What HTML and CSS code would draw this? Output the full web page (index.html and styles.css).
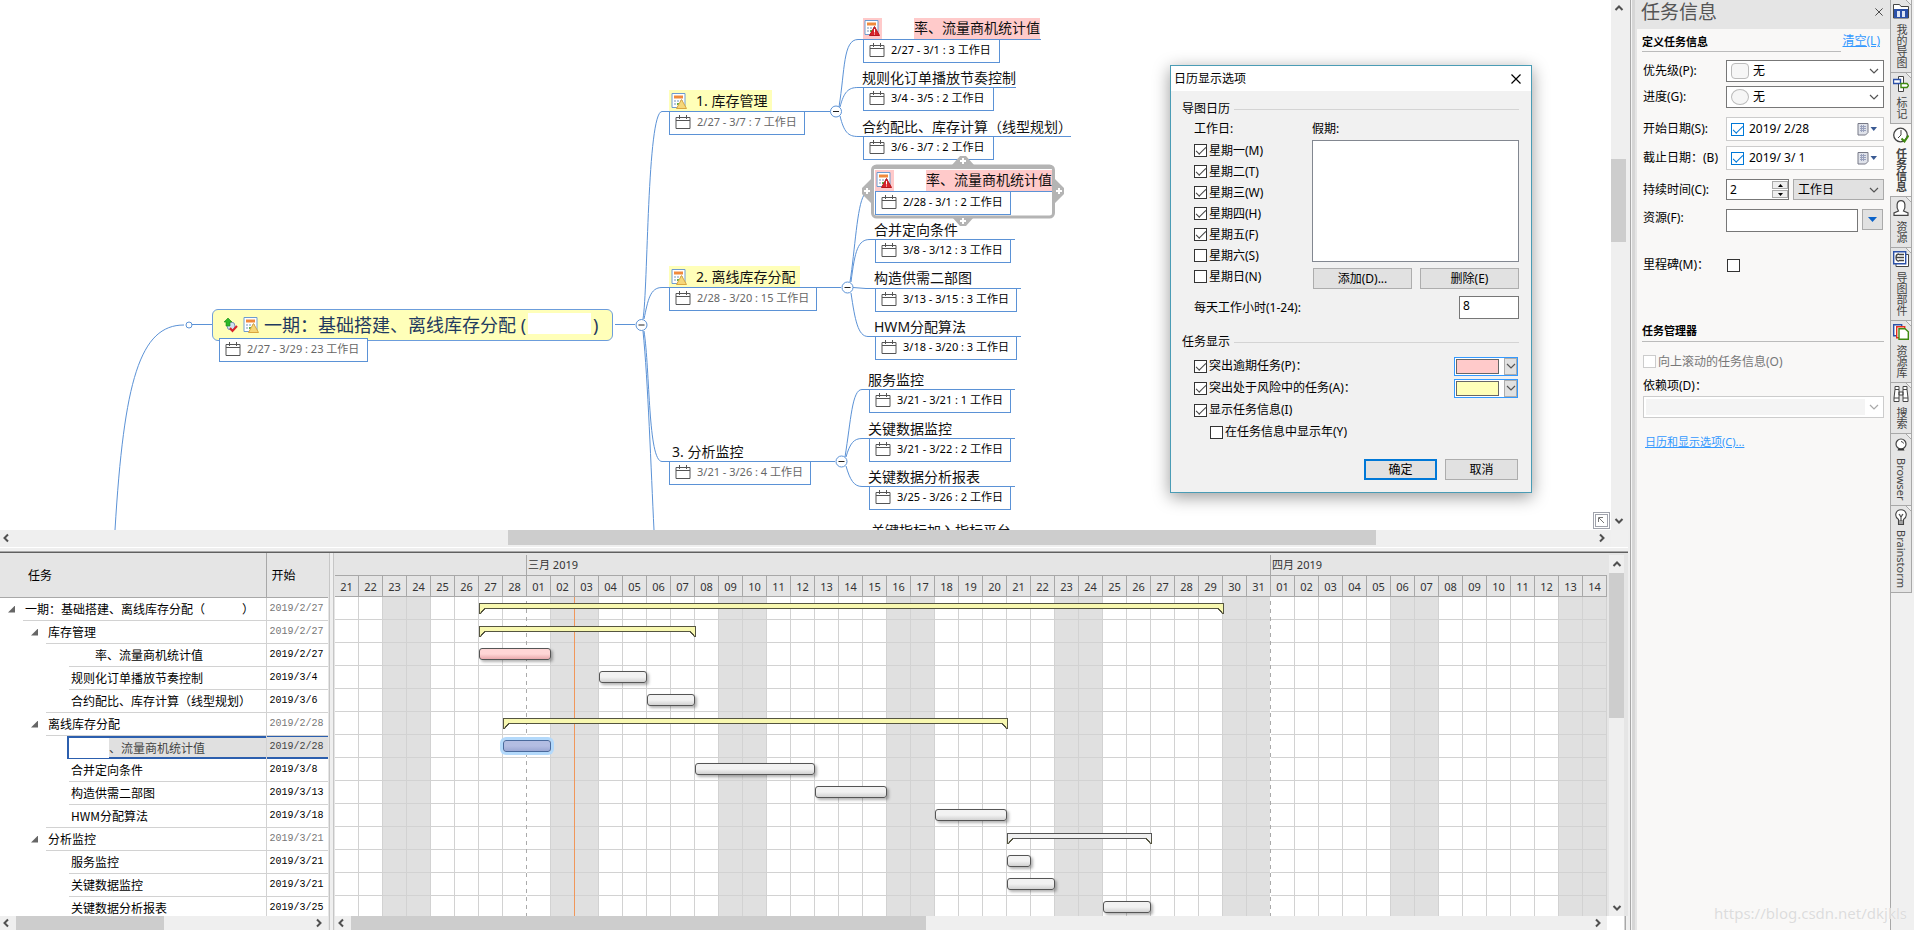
FILE: index.html
```html
<!DOCTYPE html>
<html lang="zh-CN">
<head>
<meta charset="utf-8">
<title>任务信息</title>
<link rel="stylesheet" href="styles.css">
</head>
<body>
<svg class="defs" aria-hidden="true">
  <defs>
    <symbol id="cal" viewBox="0 0 16 14"><path d="M1 2.5h14v11H1zM1 5.5h14M4.500 0v4M11.500 0v4" fill="none" stroke="#555"/></symbol>
    <symbol id="sheet" viewBox="0 0 16 16"><path d="M1 .5h13v14H1z" fill="#fff" stroke="#6d9bd0"/><path d="M3 2.500h9v3H3z" fill="#f08a3c"/><path d="M3 7h2v2H3zM6 7h2v2H6zM9 7h3v2H9zM3 10h2v2H3z" fill="#b9c9dd"/><path d="M6 10h2v2H6z" fill="#5bb04a"/></symbol>
    <symbol id="warn" viewBox="0 0 16 16"><use href="#sheet"/><path d="M10.500 6.500l5 9h-10z" fill="#f6d779" stroke="#d9a640"/></symbol>
    <symbol id="late" viewBox="0 0 16 16"><use href="#sheet"/><path d="M10.500 6.500l5 9h-10z" fill="#d8232a" stroke="#b5161c"/><path d="M10.500 9v3.500M10.500 13.500v1" stroke="#fff"/></symbol>
    <symbol id="up" viewBox="0 0 10 8"><path d="M1.500 6L5 2.500 8.500 6" fill="none" stroke="#505050" stroke-width="2"/></symbol>
    <symbol id="down" viewBox="0 0 10 8"><path d="M1.500 2L5 5.500 8.500 2" fill="none" stroke="#505050" stroke-width="2"/></symbol>
    <symbol id="left" viewBox="0 0 8 10"><path d="M6 1.500L2.500 5 6 8.500" fill="none" stroke="#505050" stroke-width="2"/></symbol>
    <symbol id="right" viewBox="0 0 8 10"><path d="M2 1.500L5.500 5 2 8.500" fill="none" stroke="#505050" stroke-width="2"/></symbol>
    <symbol id="chev" viewBox="0 0 10 6"><path d="M1 1l4 4 4-4" fill="none" stroke="#555" stroke-width="1.200"/></symbol>
    <symbol id="x" viewBox="0 0 10 10"><path d="M.5.5l9 9M9.500.5l-9 9" fill="none" stroke="currentColor" stroke-width="1.200"/></symbol>
    <symbol id="datepick" viewBox="0 0 20 13"><path d="M1 .5h10v9l-2.500 2.500H1z" fill="#dfe2ea" stroke="#777986"/><path d="M3 3.500h6M3 5.500h6M3 7.500h6M4.500 2v7M6.500 2v7" stroke="#9aa2bd" fill="none"/><path d="M13.500 4h6.500l-3.250 4z" fill="#3a5a93"/></symbol>
  </defs>
</svg>

<main class="main">
  <section class="map">
    <div class="canvas">
      <svg class="links" width="1611" height="560" fill="none" stroke="#5b92d6">
        <path d="M115 530C124 380 140 325 184 325M192 324.500H212M615 324.500H635"/>
        <circle cx="189" cy="325" r="3" fill="#fff"/>
        <path d="M643 319C648 290 647 111.500 662 111.500H830M644 319C648 300 650 287.500 662 287.500H841M644 331C650 370 648 461.500 662 461.500H835M643 331C648 380 651 470 654 530"/>
        <path d="M839 107C845 70 843 39.500 858 39.500H1041M840 107C844 92 848 87.500 858 87.500H1016M840 116C844 132 848 136.500 858 136.500H1071"/>
        <path d="M850 282C855 250 857 206 864 195M851 282C855 250 858 239.500 870 239.500H1015M853 287.500L866 288.500H1021M851 293C855 320 858 336.500 868 336.500H1021"/>
        <path d="M845 457C851 420 852 389.500 862 389.500H1015M846 457C850 443 854 438.500 862 438.500H1015M846 466C850 480 854 486.500 862 486.500H1015"/>
        <g fill="#fff"><circle cx="641.500" cy="325" r="5.500"/><circle cx="836" cy="111.500" r="5.500"/><circle cx="847.500" cy="287.500" r="5.500"/><circle cx="841.500" cy="461.500" r="5.500"/></g>
        <path d="M638.500 325h6M833 111.500h6M844.500 287.500h6M838.500 461.500h6" stroke="#222"/>
      </svg>

      <div class="topic root" style="left:212px;top:309px">
        <svg width="14" height="16" viewBox="0 0 14 16"><circle cx="7" cy="9" r="4" fill="#cfe0f0" stroke="#7d93b5"/><path d="M4 1l4 4H6v4H2V5H0z" fill="#2db928" stroke="#168a14" stroke-width=".6"/><path d="M6 11l2.500 3L13 9" fill="none" stroke="#d8232a" stroke-width="2"/></svg>
        <svg width="16" height="16"><use href="#warn"/></svg>
        <span>一期：基础搭建、离线库存分配 (</span><span class="blank"></span><span>)</span>
      </div>
      <div class="info soft" style="left:219px;top:338px;width:149px"><svg><use href="#cal"/></svg>2/27 - 3/29 : 23 工作日</div>

      <div class="topic risk" style="left:669px;top:90px"><svg width="16" height="16"><use href="#warn"/></svg><span>1. 库存管理</span></div>
      <div class="info soft" style="left:669px;top:111px;width:136px"><svg><use href="#cal"/></svg>2/27 - 3/7 : 7 工作日</div>
      <div class="topic risk" style="left:669px;top:266px"><svg width="16" height="16"><use href="#warn"/></svg><span>2. 离线库存分配</span></div>
      <div class="info soft" style="left:669px;top:287px;width:148px"><svg><use href="#cal"/></svg>2/28 - 3/20 : 15 工作日</div>
      <div class="topic" style="left:672px;top:441px"><span>3. 分析监控</span></div>
      <div class="info soft" style="left:669px;top:461px;width:142px"><svg><use href="#cal"/></svg>3/21 - 3/26 : 4 工作日</div>

      <div class="topic overdue" style="left:863px;top:18px"><svg width="19" height="21" viewBox="-1 -2 19 21"><use href="#late" width="16" height="16"/></svg><span>率、流量商机统计值</span></div>
      <div class="info" style="left:863px;top:39px;width:137px"><svg><use href="#cal"/></svg>2/27 - 3/1 : 3 工作日</div>
      <div class="topic" style="left:862px;top:67px"><span>规则化订单播放节奏控制</span></div>
      <div class="info" style="left:863px;top:87px;width:131px"><svg><use href="#cal"/></svg>3/4 - 3/5 : 2 工作日</div>
      <div class="topic" style="left:862px;top:116px"><span>合约配比、库存计算（线型规划）</span></div>
      <div class="info" style="left:863px;top:136px;width:131px"><svg><use href="#cal"/></svg>3/6 - 3/7 : 2 工作日</div>

      <svg class="frame" style="left:861px;top:154px" width="204" height="74" viewBox="0 0 204 74"><path d="M99 2h6l8 9v3H91v-3zM99 72h6l8-9v-3H91v3zM1 40v-6l9-9h3v24h-3zM203 40v-6l-9-9h-3v24h3z" fill="#b4b4b4"/><rect x="11.500" y="12" width="181" height="51" rx="4" fill="#fff" stroke="#b4b4b4" stroke-width="3"/><path d="M13 13h178" stroke="#b4b4b4" stroke-width="4"/><path d="M102 4v6M99 7h6M102 64v6M99 67h6M6 34v6M3 37h6M198 34v6M195 37h6" stroke="#fff" stroke-width="2"/></svg>
      <div class="topic overdue" style="left:875px;top:170px"><svg width="19" height="21" viewBox="-1 -2 19 21"><use href="#late" width="16" height="16"/></svg><span>率、流量商机统计值</span></div>
      <div class="rule" style="left:875px;top:191px;width:177px"></div>
      <div class="info" style="left:875px;top:191px;width:136px"><svg><use href="#cal"/></svg>2/28 - 3/1 : 2 工作日</div>
      <div class="topic" style="left:874px;top:219px"><span>合并定向条件</span></div>
      <div class="info" style="left:875px;top:239px;width:136px"><svg><use href="#cal"/></svg>3/8 - 3/12 : 3 工作日</div>
      <div class="topic" style="left:874px;top:267px"><span>构造供需二部图</span></div>
      <div class="info" style="left:875px;top:288px;width:142px"><svg><use href="#cal"/></svg>3/13 - 3/15 : 3 工作日</div>
      <div class="topic" style="left:874px;top:316px"><span>HWM分配算法</span></div>
      <div class="info" style="left:875px;top:336px;width:142px"><svg><use href="#cal"/></svg>3/18 - 3/20 : 3 工作日</div>
      <div class="topic" style="left:868px;top:369px"><span>服务监控</span></div>
      <div class="info" style="left:869px;top:389px;width:142px"><svg><use href="#cal"/></svg>3/21 - 3/21 : 1 工作日</div>
      <div class="topic" style="left:868px;top:418px"><span>关键数据监控</span></div>
      <div class="info" style="left:869px;top:438px;width:142px"><svg><use href="#cal"/></svg>3/21 - 3/22 : 2 工作日</div>
      <div class="topic" style="left:868px;top:466px"><span>关键数据分析报表</span></div>
      <div class="info" style="left:869px;top:486px;width:142px"><svg><use href="#cal"/></svg>3/25 - 3/26 : 2 工作日</div>
      <div class="topic" style="left:871px;top:520px"><span>关键指标加入指标平台</span></div>

      <button class="corner" aria-label="缩略图"><svg width="7" height="7" viewBox="0 0 7 7"><path d="M.5 5V.5H5M1 1l5 5" fill="none" stroke="#777"/></svg></button>
    </div>
    <div class="sb v"><svg width="10" height="8"><use href="#up"/></svg><i style="flex-grow:143"></i><b style="flex-grow:83"></b><i style="flex-grow:270"></i><svg width="10" height="8"><use href="#down"/></svg></div>
    <div class="sb h"><svg width="8" height="10"><use href="#left"/></svg><i style="flex-grow:491"></i><b style="flex-grow:867"></b><i style="flex-grow:219"></i><svg width="8" height="10"><use href="#right"/></svg></div>
    <div></div>
  </section>
  <div class="strip"></div>

  <section class="gantt">
    <div class="list">
      <table>
        <thead><tr><th class="name">任务</th><th>开始</th></tr></thead>
        <tbody>
          <tr class="l0 sum"><td class="name"><div class="r1">一期：基础搭建、离线库存分配（<span class="gap"></span>）</div></td><td>2019/2/27</td></tr>
          <tr class="l1 sum"><td class="name"><div class="r2">库存管理</div></td><td>2019/2/27</td></tr>
          <tr class="l2"><td class="name"><div class="r3"><span class="cut"></span>率、流量商机统计值</div></td><td>2019/2/27</td></tr>
          <tr class="l2"><td class="name"><div class="r3">规则化订单播放节奏控制</div></td><td>2019/3/4</td></tr>
          <tr class="l2"><td class="name"><div class="r2">合约配比、库存计算（线型规划）</div></td><td>2019/3/6</td></tr>
          <tr class="l1 sum"><td class="name"><div class="r2">离线库存分配</div></td><td>2019/2/28</td></tr>
          <tr class="l2 on"><td class="name"><div class="r3"><span class="mask"></span>、流量商机统计值</div></td><td>2019/2/28</td></tr>
          <tr class="l2"><td class="name"><div class="r3">合并定向条件</div></td><td>2019/3/8</td></tr>
          <tr class="l2"><td class="name"><div class="r3">构造供需二部图</div></td><td>2019/3/13</td></tr>
          <tr class="l2"><td class="name"><div class="r2">HWM分配算法</div></td><td>2019/3/18</td></tr>
          <tr class="l1 sum"><td class="name"><div class="r2">分析监控</div></td><td>2019/3/21</td></tr>
          <tr class="l2"><td class="name"><div class="r3">服务监控</div></td><td>2019/3/21</td></tr>
          <tr class="l2"><td class="name"><div class="r3">关键数据监控</div></td><td>2019/3/21</td></tr>
          <tr class="l2"><td class="name"><div class="r3">关键数据分析报表</div></td><td>2019/3/25</td></tr>
        </tbody>
      </table>
    </div>
    <div class="vsplit"></div>
    <div class="chart">
      <div class="months"><span class="m0"></span><span class="m1">三月 2019</span><span class="m2">四月 2019</span></div>
      <div class="days"><span>21</span><span>22</span><span>23</span><span>24</span><span>25</span><span>26</span><span>27</span><span>28</span><span>01</span><span>02</span><span>03</span><span>04</span><span>05</span><span>06</span><span>07</span><span>08</span><span>09</span><span>10</span><span>11</span><span>12</span><span>13</span><span>14</span><span>15</span><span>16</span><span>17</span><span>18</span><span>19</span><span>20</span><span>21</span><span>22</span><span>23</span><span>24</span><span>25</span><span>26</span><span>27</span><span>28</span><span>29</span><span>30</span><span>31</span><span>01</span><span>02</span><span>03</span><span>04</span><span>05</span><span>06</span><span>07</span><span>08</span><span>09</span><span>10</span><span>11</span><span>12</span><span>13</span><span>14</span></div>
      <div class="plot">
        <i class="edge" style="grid-column:8"></i><i class="edge" style="grid-column:39"></i><i class="today" style="grid-column:10"></i>
        <b class="group" style="grid-area:1/7/2/38"></b>
        <b class="group" style="grid-area:2/7/3/16"></b>
        <b class="bar red" style="grid-area:3/7/4/10"></b>
        <b class="bar" style="grid-area:4/12/5/14"></b>
        <b class="bar" style="grid-area:5/14/6/16"></b>
        <b class="group" style="grid-area:6/8/7/29"></b>
        <b class="bar blue" style="grid-area:7/8/8/10"></b>
        <b class="bar" style="grid-area:8/16/9/21"></b>
        <b class="bar" style="grid-area:9/21/10/24"></b>
        <b class="bar" style="grid-area:10/26/11/29"></b>
        <b class="group plain" style="grid-area:11/29/12/35"></b>
        <b class="bar" style="grid-area:12/29/13/30"></b>
        <b class="bar" style="grid-area:13/29/14/31"></b>
        <b class="bar" style="grid-area:14/33/15/35"></b>
      </div>
    </div>
    <div class="sb v"><svg width="10" height="8"><use href="#up"/></svg><b style="flex-grow:145"></b><i style="flex-grow:183"></i><svg width="10" height="8"><use href="#down"/></svg></div>
    <div class="sb h"><svg width="8" height="10"><use href="#left"/></svg><b style="flex-grow:147"></b><i style="flex-grow:147"></i><svg width="8" height="10"><use href="#right"/></svg></div>
    <div class="vsplit"></div>
    <div class="sb h"><svg width="8" height="10"><use href="#left"/></svg><b style="flex-grow:575"></b><i style="flex-grow:664"></i><svg width="8" height="10"><use href="#right"/></svg></div>
    <div class="nook"></div>
  </section>
</main>

<div class="divider"></div>

<aside class="panel">
  <header><h1>任务信息</h1><button aria-label="关闭面板"><svg width="8" height="8"><use href="#x" width="8" height="8"/></svg></button></header>
  <div class="head first"><h2>定义任务信息</h2><a href="#">清空(L)</a></div>
  <form class="fields">
    <label for="prio">优先级(P):</label>
    <div class="combo"><i class="sq"></i><select id="prio"><option>无</option></select><svg width="10" height="6"><use href="#chev"/></svg></div>
    <label for="prog">进度(G):</label>
    <div class="combo"><i class="ro"></i><select id="prog"><option>无</option></select><svg width="10" height="6"><use href="#chev"/></svg></div>
    <label for="start" class="far">开始日期(S):</label>
    <div class="date far"><input type="checkbox" aria-label="启用开始日期" checked><input id="start" type="text" value="2019/ 2/28"><button type="button" aria-label="选择开始日期"><svg width="20" height="13"><use href="#datepick"/></svg></button></div>
    <label for="end" class="near">截止日期：(B)</label>
    <div class="date near"><input type="checkbox" aria-label="启用截止日期" checked><input id="end" type="text" value="2019/ 3/ 1"><button type="button" aria-label="选择截止日期"><svg width="20" height="13"><use href="#datepick"/></svg></button></div>
    <label for="dur" class="far">持续时间(C):</label>
    <div class="pair far"><div class="spin"><input id="dur" type="text" value="2"><span><button type="button" aria-label="增加"><svg width="5" height="3"><path d="M0 3h5L2.500 0z"/></svg></button><button type="button" aria-label="减少"><svg width="5" height="3"><path d="M0 0h5L2.500 3z"/></svg></button></span></div><div class="combo unit"><select aria-label="时间单位"><option>工作日</option></select><svg width="10" height="6"><use href="#chev"/></svg></div></div>
    <label for="res" class="near">资源(F):</label>
    <div class="pair far"><input id="res" class="res" type="text"><button type="button" class="drop" aria-label="选择资源"><svg width="9" height="5"><path d="M0 0h9L4.500 5z" fill="#0a62c9"/></svg></button></div>
    <label for="mile" class="mile">里程碑(M)：</label>
    <div class="mile"><input id="mile" type="checkbox"></div>
  </form>
  <div class="head second"><h2>任务管理器</h2></div>
  <label class="roll"><input type="checkbox" disabled>向上滚动的任务信息(O)</label>
  <label class="dep" for="dep">依赖项(D)：</label>
  <div class="combo off"><select id="dep" disabled><option></option></select><svg width="10" height="6"><use href="#chev"/></svg></div>
  <a class="opts" href="#">日历和显示选项(C)...</a>
</aside>

<nav class="tabs">
  <button><svg width="16" height="16" viewBox="0 0 16 16"><path d="M.5 15V1.500h6l1.500 2h7.500V15z" fill="#fff" stroke="#444"/><path d="M1 6h14v9H1z" fill="#2b50a8"/><path d="M4 8h3v6H4zM9 8h3v6H9z" fill="#dfe6f5"/></svg><span>我的导图</span></button>
  <button><svg width="16" height="16" viewBox="0 0 16 16"><path d="M5.500.5h5v15h-5z" fill="#fff" stroke="#444"/><path d="M.5 3.500h7v4h-7z" fill="#fff" stroke="#2b50a8" stroke-width="1.400"/><path d="M8 7.500h6l1.500 2-1.500 2H8z" fill="#fff" stroke="#3f8a10" stroke-width="1.400"/></svg><span>标记</span></button>
  <button class="cur"><svg width="16" height="16" viewBox="0 0 16 16"><circle cx="7.500" cy="8" r="6.800" fill="#fff" stroke="#444" stroke-width="1.300"/><path d="M8 3v5l-3 3" fill="none" stroke="#444"/><path d="M8.500 11.500l3 3 4-6" fill="none" stroke="#3f8a10" stroke-width="2"/></svg><span>任务信息</span></button>
  <button><svg width="16" height="16" viewBox="0 0 16 16"><path d="M5.500 11C3 7 3.500.7 8 .7s5 6.300 2.500 10.300l4.500 2v2.300H1V13z" fill="#fff" stroke="#444" stroke-width="1.200"/></svg><span>资源</span></button>
  <button><svg width="16" height="16" viewBox="0 0 16 16"><path d="M3 3.500h12.500v12H3z" fill="#fff" stroke="#444"/><path d="M.7.7h12v12h-12z" fill="#fff" stroke="#2b50a8" stroke-width="1.400"/><path d="M6 3.500h5M6 6.500h5M6 9.500h5M6 3c-4 0-4 7 0 7M3 6.500h3" fill="none" stroke="#444" stroke-width="1.300"/></svg><span>导图部件</span></button>
  <button><svg width="16" height="16" viewBox="0 0 16 16"><path d="M.7.7h8v11h-8z" fill="#fff" stroke="#2b50a8" stroke-width="1.400"/><path d="M3.700 2.700h8v11h-8z" fill="#fff" stroke="#e2321c" stroke-width="1.400"/><path d="M6 4.700h6l3.300 3v7.600H6z" fill="#fff" stroke="#3f8a10" stroke-width="1.400"/></svg><span>资源库</span></button>
  <button><svg width="16" height="16" viewBox="0 0 16 16"><path d="M2 .5h4v3H2zM10 .5h4v3h-4zM2 3.500L1 12v3.500h5V3.500zM14 3.500l1 8.500v3.500h-5V3.500zM6 6h4v3H6zM1 12h5M10 12h5" fill="#fff" stroke="#444"/></svg><span>搜索</span></button>
  <button><svg width="16" height="16" viewBox="0 0 16 16"><circle cx="8" cy="7" r="5" fill="#fff" stroke="#444" stroke-width="1.200"/><path d="M8 4.500q2 0 2.500 2" fill="none" stroke="#444"/><path d="M5.500 11.500h5l1 2h-7z" fill="#333"/></svg><span>Browser</span></button>
  <button><svg width="16" height="16" viewBox="0 0 16 16"><path d="M5.500 10.500C.5 7 3 .7 8 .7s7.500 6.300 2.500 9.800v5h-5zM5.500 12h5M5.500 14h5M6 5l2 3 2-3M8 8v4" fill="#fff" stroke="#444" stroke-width="1.100"/></svg><span>Brainstorm</span></button>
</nav>

<section class="dialog" role="dialog" aria-labelledby="dlg">
  <header><h2 id="dlg">日历显示选项</h2><button aria-label="关闭"><svg width="10" height="10"><use href="#x"/></svg></button></header>
  <div class="body">
    <h3>导图日历</h3>
    <div class="cols">
      <div class="week">
        <p>工作日:</p>
        <label><input type="checkbox" checked>星期一(M)</label>
        <label><input type="checkbox" checked>星期二(T)</label>
        <label><input type="checkbox" checked>星期三(W)</label>
        <label><input type="checkbox" checked>星期四(H)</label>
        <label><input type="checkbox" checked>星期五(F)</label>
        <label><input type="checkbox">星期六(S)</label>
        <label><input type="checkbox">星期日(N)</label>
      </div>
      <div class="hol">
        <label for="hol">假期:</label>
        <select id="hol" size="5"></select>
        <div class="btns"><button>添加(D)...</button><button>删除(E)</button></div>
      </div>
    </div>
    <div class="hours"><label for="hrs">每天工作小时(1-24):</label><input id="hrs" type="text" value="8"></div>
    <h3>任务显示</h3>
    <div class="shows">
      <div><label><input type="checkbox" checked>突出逾期任务(P)：</label><button class="pick" aria-label="逾期任务颜色"><i class="pink"></i><span><svg width="10" height="6"><use href="#chev"/></svg></span></button></div>
      <div><label><input type="checkbox" checked>突出处于风险中的任务(A)：</label><button class="pick" aria-label="风险任务颜色"><i class="yellow"></i><span><svg width="10" height="6"><use href="#chev"/></svg></span></button></div>
      <div><label><input type="checkbox" checked>显示任务信息(I)</label></div>
      <div class="sub"><label><input type="checkbox">在任务信息中显示年(Y)</label></div>
    </div>
    <footer><button class="ok">确定</button><button>取消</button></footer>
  </div>
</section>

<div class="mark">https://blog.csdn.net/dkjkls</div>
</body>
</html>
```
FILE: styles.css
```css
* { box-sizing: border-box; }
body {
  margin: 0;
  height: 100vh;
  display: flex;
  overflow: hidden;
  position: relative;
  background: #f0f0f0;
  color: #000;
  font: 12px/16px "Noto Sans", "Noto Sans CJK SC", sans-serif;
}
button, input, select { font: inherit; color: inherit; margin: 0; padding: 0; border-radius: 0; outline: 0; }
h1, h2, h3, p { margin: 0; font-weight: normal; font-size: inherit; }
svg { display: block; flex: none; }
.defs { position: absolute; width: 0; height: 0; }

input[type=checkbox] {
  appearance: none;
  flex: none;
  width: 13px;
  height: 13px;
  border: 1px solid #333;
  background: #fff;
  display: grid;
  place-items: center;
}
input[type=checkbox]:checked::after {
  content: "";
  width: 9px;
  height: 4px;
  border: solid #444;
  border-width: 0 0 1px 1px;
  transform: translateY(-1px) rotate(-45deg);
}
input[type=checkbox]:disabled { border-color: #ccc; }

/* layout */
.main { flex: 1; min-width: 0; display: flex; flex-direction: column; }
.map { flex: 547 1 0; min-height: 0; display: grid; grid-template: minmax(0, 1fr) 17px / minmax(0, 1fr) 17px; }
.strip { height: 6px; background: linear-gradient(#fff 1px, #efefef 1px 4px, #a8a8a8 4px 5px, #606060 5px); }
.gantt { flex: 377 1 0; min-height: 0; display: grid; grid-template: minmax(0, 1fr) 14px / 328px 7px minmax(0, 1fr) 21px; background: #e5e5e5; }
.divider { width: 9px; background: linear-gradient(90deg, #efefef 2px, #a8a8a8 2px 3px, #f4f4f4 3px 4px, #d6d6d6 4px 7px, #e5e5e5 7px); }

/* scroll bars */
.sb { display: flex; align-items: center; background: #efefef; }
.sb i, .sb b { flex: 1 1 0; }
.sb b { background: #cdcdcd; align-self: stretch; }
.sb.h svg { margin: 0 6px 0 2px; }
.sb.h svg:last-child { margin: 0 5px 0 3px; }
.map .sb.h { padding-bottom: 2px; }
.sb.v { flex-direction: column; }
.sb.v svg { margin: 4px 0; }
.map .sb.v { padding-right: 2px; }
.map .sb.v svg:last-child { margin-bottom: 5px; }
.gantt .sb.v { margin: 2px 4px 0 2px; }
.gantt .sb.v svg:first-child { margin: 5px 0; }
.nook { background: linear-gradient(90deg, #fff 17px, #a8a8a8 18px 19px, #f0f0f0 19px); }

/* mind map */
.canvas { position: relative; overflow: hidden; background: #fff; }
.links { position: absolute; left: 0; top: 0; }
.frame { position: absolute; }
.topic { position: absolute; display: flex; align-items: center; height: 21px; font-size: 14px; line-height: 20px; white-space: nowrap; color: #111; }
.root { height: 32px; padding: 0 13px 0 11px; gap: 5px; border: 1px solid #6c9ddb; border-radius: 6px; background: #ffffb9; font-size: 18px; line-height: 28px; color: #1f3a5f; }
.root span + span { margin-left: -3px; }
.root .blank { width: 63px; height: 21px; margin-bottom: 4px; background: #fff; }
.risk { padding: 0 5px 0 2px; gap: 9px; background: #ffffb9; }
.overdue { gap: 32px; }
.overdue svg, .overdue span { background: #ffcaca; }
.overdue span { height: 21px; }
.rule { position: absolute; height: 1px; background: #5b92d6; }
.info { position: absolute; display: flex; align-items: center; gap: 6px; height: 24px; padding: 0 0 2px 5px; border: 1px solid #5b92d6; background: #fff; font-size: 11px; line-height: 16px; white-space: nowrap; }
.info svg { width: 16px; height: 14px; }
.soft { color: #666; }
.corner { position: absolute; right: 1px; bottom: 1px; width: 17px; height: 17px; display: grid; place-items: center; border: 3px double #a0a3ac; background: #fff; }

/* task list */
.list { overflow: hidden; background: #fff; }
.list table { width: 100%; border-collapse: collapse; table-layout: fixed; }
.list th { height: 44px; padding: 3px 5px 0; text-align: left; font-weight: normal; background: #e5e5e5; border-bottom: 1px solid #a8a8a8; }
.list th.name { width: 266px; padding-left: 28px; border-right: 1px solid #a8a8a8; }
.list td { height: 23px; padding: 0 0 0 3px; border-bottom: 1px solid #d2d2d2; font: 10px/16px "Liberation Mono", monospace; }
.list td.name { padding: 0; position: relative; border-bottom: 0; border-right: 1px solid #d2d2d2; font: 12px/22px "Noto Sans CJK SC", sans-serif; white-space: nowrap; }
.list .name div { height: 23px; border-bottom: 1px solid #d2d2d2; }
.list .r1 { margin-left: 23px; }
.list .r2 { margin-left: 46px; }
.list .r3 { margin-left: 69px; }
.l0 .r1, .l1 .r2, .l2 .r3 { text-indent: 2px; }
.l2 .r2 { text-indent: 25px; }
.list .sum td:last-child { color: #777; }
.sum .name::before { content: ""; position: absolute; left: 31px; top: 8px; width: 7px; height: 7px; background: #666; clip-path: polygon(100% 0, 100% 100%, 0 100%); }
.l0 .name::before { left: 8px; }
.gap { display: inline-block; width: 37px; }
.cut { display: inline-block; width: 24px; }
.mask { display: inline-block; width: 40px; height: 20px; margin-left: -2px; vertical-align: top; background: #fff; }
.list .on td { background: #e0e0e0; color: #444; border-bottom-color: #2c5fae; box-shadow: 0 -1px #2c5fae, inset 0 1px #2c5fae, inset 0 -1px #2c5fae; }
.list .on td.name { background: #fff; box-shadow: none; }
.list .on .name div { margin-left: 67px; background: #e0e0e0; border: 2px solid #2c5fae; border-right: 0; line-height: 19px; }
.vsplit { background: linear-gradient(90deg, #e5e5e5 1px, #c6c6c6 1px 2px, #efefef 2px 5px, #c6c6c6 5px 6px, #e5e5e5 6px); }

/* gantt chart */
.chart { display: flex; flex-direction: column; overflow: hidden; font-size: 11px; color: #333; }
.months { display: flex; height: 23px; padding-top: 2px; border-bottom: 1px solid #a8a8a8; }
.months span { border-right: 1px solid #a8a8a8; padding-left: 1px; line-height: 20px; flex: none; }
.m0 { width: 192px; }
.m1 { width: 744px; }
.months .m2 { flex: 1; border: 0; }
.days { display: grid; grid-template-columns: repeat(53, 24px); height: 21px; border-bottom: 1px solid #a8a8a8; line-height: 21px; text-align: center; }
.days span { border-right: 1px solid #a8a8a8; }
.plot {
  flex: 1;
  min-height: 0;
  display: grid;
  grid-template: repeat(14, 23px) / repeat(53, 24px);
  background:
    repeating-linear-gradient(90deg, transparent 0 23px, #d2d2d2 23px 24px),
    repeating-linear-gradient(transparent 0 22px, #d2d2d2 22px 23px),
    repeating-linear-gradient(90deg, #fff 0 47px, #e0e0e0 47px 96px, #fff 96px 168px);
}
.edge { grid-row: 1 / 15; justify-self: end; width: 1px; background: repeating-linear-gradient(#fff 0 4px, #aaa 4px 8px); }
.today { grid-row: 1 / 15; justify-self: end; width: 1px; background: #f0975a; }
.bar { height: 12px; margin-top: 5px; border: 1px solid #555; border-radius: 3px; background: linear-gradient(#f2f2f2 50%, #d2d2d2); box-shadow: 2px 2px 3px rgba(0, 0, 0, .3); }
.red { background: linear-gradient(#ffd6d6 50%, #e8a9ac); }
.blue { background: linear-gradient(#b3bde2 50%, #9ba7d3); border-color: #4a6a9c; box-shadow: 0 0 0 3px #b3d9fb; }
.group { position: relative; --fill: #f8f8b0; height: 6px; margin: 6px -1px 0 0; border: 1px solid #555540; background: var(--fill); }
.plain { --fill: #f0f0f0; border-color: #555; }
.group::before, .group::after { content: ""; position: absolute; top: 4px; width: 5px; height: 6px; }
.group::before { left: -1px; border-left: 1px solid #555540; background: linear-gradient(to bottom right, var(--fill) 42%, #555540 43% 60%, transparent 61%); }
.group::after { right: -1px; border-right: 1px solid #555540; background: linear-gradient(to bottom left, var(--fill) 42%, #555540 43% 60%, transparent 61%); }

/* task panel */
.panel { width: 253px; padding: 0 6px 0 5px; background: #f9f8f7; }
.panel header { display: flex; align-items: center; justify-content: space-between; height: 29px; margin: 0 -6px 0 -5px; padding: 0 7px 5px 4px; background: #e5e5e5; }
.panel h1 { font-size: 19px; line-height: 24px; color: #555; }
.panel header button, .dialog header button { border: 0; background: none; }
.panel header button { color: #444; }
.head { display: flex; justify-content: space-between; height: 23px; line-height: 26px; font-size: 11px; }
.head h2 { font-weight: bold; border-bottom: 1px solid #bbb; flex: 1; }
.head a { padding-right: 4px; margin-left: 2px; line-height: 24px; font-size: 12px; }
.panel a { color: #3399ff; text-decoration: underline; }
.second { margin-top: 46px; line-height: 24px; }
.fields { display: grid; grid-template-columns: 84px minmax(0, 1fr); align-items: center; row-gap: 4px; margin: 8px 0 0; }
.fields label { padding-left: 1px; white-space: nowrap; }
.far { margin-top: 5px; }
.near { margin-top: 1px; }
.fields .mile { margin-top: 23px; padding-left: 1px; }
.combo { display: flex; align-items: center; position: relative; height: 22px; border: 1px solid #777; background: #fff; }
.combo select { appearance: none; flex: 1; align-self: stretch; border: 0; background: none; padding-left: 4px; }
.combo > svg { position: absolute; right: 4px; }
.combo i { width: 18px; height: 16px; margin-left: 4px; border: 1px solid #bbb; background: #f6f6f6; }
.sq { border-radius: 4px; }
.ro { border-radius: 50%; }
.date { display: flex; align-items: center; height: 24px; padding: 0 6px 0 4px; border: 1px solid #ccc; background: #fff; }
.date input[type=checkbox] { border-color: #0078d7; }
.date input[type=checkbox]::after { border-color: #0078d7; }
.date input[type=text] { flex: 1; min-width: 0; border: 0; padding-left: 5px; white-space: pre; }
.date button { border: 0; background: none; }
.pair { display: flex; gap: 4px; height: 21px; }
.spin { display: flex; width: 63px; border: 1px solid #777; background: #fff; }
.spin input { flex: 1; min-width: 0; border: 0; padding-left: 3px; }
.spin span { display: grid; width: 16px; gap: 1px; padding: 1px 0; }
.spin button { border: 1px solid #aaa; background: #eee; display: grid; place-items: center; }
.unit { flex: 1; height: 21px; border-color: #aaa; background: #e1e1e1; }
.res { flex: 1; min-width: 0; height: 23px; border: 1px solid #777; background: #fff; }
.drop { width: 21px; height: 21px; margin-right: 1px; display: grid; place-items: center; border: 1px solid #aaa; background: #e1e1e1; }
.roll { display: flex; align-items: center; gap: 2px; margin: 10px 0 7px 1px; height: 19px; color: #777; }
.dep { display: block; height: 18px; padding-left: 1px; }
.off { margin-left: 1px; border-color: #ccc; }
.off select { margin: 2px 18px 2px 2px; background: #efefef; }
.off > svg { opacity: .5; }
.opts { display: block; margin: 16px 0 0 3px; font-size: 11px; }

/* side tabs */
.tabs { width: 24px; display: flex; flex-direction: column; align-items: flex-start; background: #f0f0f0; border-left: 1px solid #a8a8a8; }
.tabs button { display: flex; flex-direction: column; align-items: center; gap: 5px; width: 21px; padding: 3px 0 4px; border: solid #a8a8a8; border-width: 0 1px 1px 0; background: linear-gradient(45deg, transparent 0 calc(100% - 4px), #a8a8a8 calc(100% - 4px) calc(100% - 3px), #f0f0f0 calc(100% - 3px)), #e5e5e5; color: #444; }
.tabs span { writing-mode: vertical-rl; font-size: 11px; line-height: 16px; }
.tabs .cur { background: #f9f8f7; width: 22px; margin-left: -1px; font-weight: bold; }

/* dialog */
.dialog { position: absolute; left: 1170px; top: 65px; width: 362px; border: 1px solid #4a9cb5; background: #f1f1f1; box-shadow: 0 4px 16px rgba(0, 0, 0, .4); }
.dialog header { display: flex; align-items: center; justify-content: space-between; height: 25px; padding: 0 10px 0 3px; background: #fff; }
.dialog .body { padding: 8px 12px 12px 11px; }
.dialog h3 { display: flex; align-items: center; gap: 4px; height: 20px; }
.dialog h3::after { content: ""; flex: 1; height: 1px; background: #d4d4d4; }
.cols { display: grid; grid-template-columns: 118px minmax(0, 1fr); padding-left: 12px; }
.cols p, .hol > label { display: block; height: 21px; line-height: 20px; }
.week label, .shows label { display: flex; align-items: center; gap: 2px; height: 21px; white-space: nowrap; }
.hol select { appearance: none; display: block; width: 100%; height: 122px; border: 1px solid #828790; background: #fff; }
.btns { display: flex; gap: 8px; margin: 6px 0 0 1px; }
.btns button { flex: 1; }
.btns button, .dialog footer button { height: 21px; border: 1px solid #adadad; background: #e1e1e1; line-height: 18px; }
.hours { display: flex; align-items: center; justify-content: space-between; padding-left: 12px; margin: 7px 0 13px; }
.hours input { width: 60px; height: 23px; border: 1px solid #777; background: #fff; padding: 0 0 4px 3px; }
.shows { padding: 3px 1px 0 12px; }
.shows > div { display: flex; align-items: center; justify-content: space-between; height: 22px; }
.shows .sub { padding-left: 16px; }
.pick { display: flex; align-items: center; justify-content: space-between; width: 64px; height: 19px; padding: 0 0 0 1px; border: 1px solid #3399ff; background: #fff; }
.pick i { width: 43px; height: 15px; border: 1px solid #666; }
.pick span { width: 13px; height: 17px; display: grid; place-items: center; background: #e1e1e1; border: 1px solid #adadad; }
.pink { background: #ffcaca; }
.yellow { background: #ffffb9; }
.dialog footer { display: flex; justify-content: flex-end; gap: 8px; margin: 16px 1px 0 0; }
.dialog footer button { width: 73px; }
.dialog footer .ok { border: 2px solid #0078d7; line-height: 16px; }

.mark { position: absolute; right: 7px; bottom: 7px; font-size: 15px; line-height: 20px; color: #dcdcdc; text-shadow: 0 0 1px #fff; }
```
